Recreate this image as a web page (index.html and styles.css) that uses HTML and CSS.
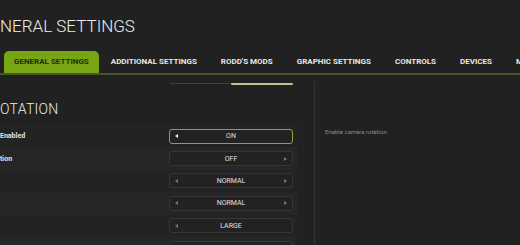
FILE: index.html
```html
<!DOCTYPE html>
<html lang="en">
<head>
  <meta charset="UTF-8">
  <title>General Settings</title>
  <link rel="stylesheet" href="styles.css">
</head>
<body>
  <div class="page">
    <h1 class="title">NERAL SETTINGS</h1>

    <nav class="tabs">
      <div class="tab active">GENERAL SETTINGS</div>
      <div class="tab">ADDITIONAL SETTINGS</div>
      <div class="tab">RODD'S MODS</div>
      <div class="tab">GRAPHIC SETTINGS</div>
      <div class="tab">CONTROLS</div>
      <div class="tab">DEVICES</div>
      <div class="tab">M</div>
    </nav>

    <div class="content">
      <div class="settings">
        <div class="scroll-row">
          <div class="scroll-track"><span class="scroll-thumb"></span></div>
        </div>

        <h2 class="section-title">OTATION</h2>

        <div class="row">
          <div class="label">Enabled</div>
          <div class="select focus"><span class="arrow left"></span><span class="value">ON</span><span class="arrow"></span></div>
        </div>
        <div class="row">
          <div class="label">tion</div>
          <div class="select"><span class="arrow"></span><span class="value">OFF</span><span class="arrow right"></span></div>
        </div>
        <div class="row">
          <div class="label"></div>
          <div class="select"><span class="arrow left"></span><span class="value">NORMAL</span><span class="arrow right"></span></div>
        </div>
        <div class="row">
          <div class="label"></div>
          <div class="select"><span class="arrow left"></span><span class="value">NORMAL</span><span class="arrow right"></span></div>
        </div>
        <div class="row">
          <div class="label"></div>
          <div class="select"><span class="arrow left"></span><span class="value">LARGE</span><span class="arrow"></span></div>
        </div>
        <div class="row">
          <div class="label"></div>
          <div class="select"><span class="arrow left"></span><span class="value"></span><span class="arrow right"></span></div>
        </div>
      </div>

      <aside class="info">
        <p class="info-text">Enable camera rotation</p>
      </aside>
    </div>
  </div>
</body>
</html>
```

FILE: styles.css
```css
* {
  box-sizing: border-box;
  margin: 0;
  padding: 0;
}

html, body {
  overflow: hidden;
}

body {
  background-color: #212121;
  color: #e6e6e6;
  font-family: Roboto, sans-serif;
  width: 520px;
  height: 245px;
}

.page {
  width: 520px;
  height: 245px;
  overflow: hidden;
}

.title {
  font-size: 17px;
  font-weight: 300;
  color: #ececec;
  line-height: 22px;
  padding-top: 15px;
  height: 51px;
}

.tabs {
  display: flex;
  padding-left: 4px;
  border-bottom: 2px solid #4a5526;
  white-space: nowrap;
}

.tab {
  font-size: 8px;
  font-weight: 700;
  line-height: 22px;
  padding: 0 12px;
  color: #e8e8e8;
}

.tab.active {
  background-color: #77a513;
  color: #243008;
  border-radius: 5px 5px 0 0;
  padding: 0 10px;
}

.content {
  display: flex;
}

.settings {
  width: 314px;
  padding-right: 17px;
}

.scroll-row {
  height: 20px;
  padding: 8px 0 0 170px;
}

.scroll-track {
  width: 123px;
  height: 1px;
  background-color: #404040;
  display: flex;
  justify-content: flex-end;
}

.scroll-thumb {
  display: block;
  width: 62px;
  height: 2px;
  margin-top: -0.5px;
  border-radius: 1px;
  background-color: #b9c58e;
}

.section-title {
  font-size: 14px;
  font-weight: 300;
  color: #ececec;
  line-height: 20px;
  height: 30px;
  padding-top: 4px;
  letter-spacing: 0.3px;
}

.row {
  display: flex;
  align-items: center;
  height: 22.4px;
  background-color: #262626;
}

.row:nth-child(odd) {
  background-color: #232323;
}

.label {
  width: 169px;
  font-size: 7px;
  font-weight: 700;
  color: #e4e4e4;
}

.select {
  width: 124px;
  height: 15px;
  border: 1px solid #363636;
  border-radius: 3px;
  background-color: #222;
  display: flex;
  align-items: center;
  padding: 0 5px;
}

.select.focus {
  border: 1.5px solid #8aa63a;
}

.value {
  flex: 1;
  text-align: center;
  font-size: 7px;
  color: #e0e0e0;
}

.arrow {
  width: 3px;
  height: 4px;
}

.arrow.left {
  border-top: 2px solid transparent;
  border-bottom: 2px solid transparent;
  border-right: 3px solid #777;
}

.arrow.right {
  border-top: 2px solid transparent;
  border-bottom: 2px solid transparent;
  border-left: 3px solid #777;
}

.select.focus .arrow.left {
  border-right-color: #f0f0f0;
}

.info {
  flex: 1;
  border-left: 1px solid #343434;
  margin-top: 6px;
  height: 200px;
  padding: 47px 0 0 10px;
}

.info-text {
  font-size: 6px;
  color: #8a8a8a;
}
```
